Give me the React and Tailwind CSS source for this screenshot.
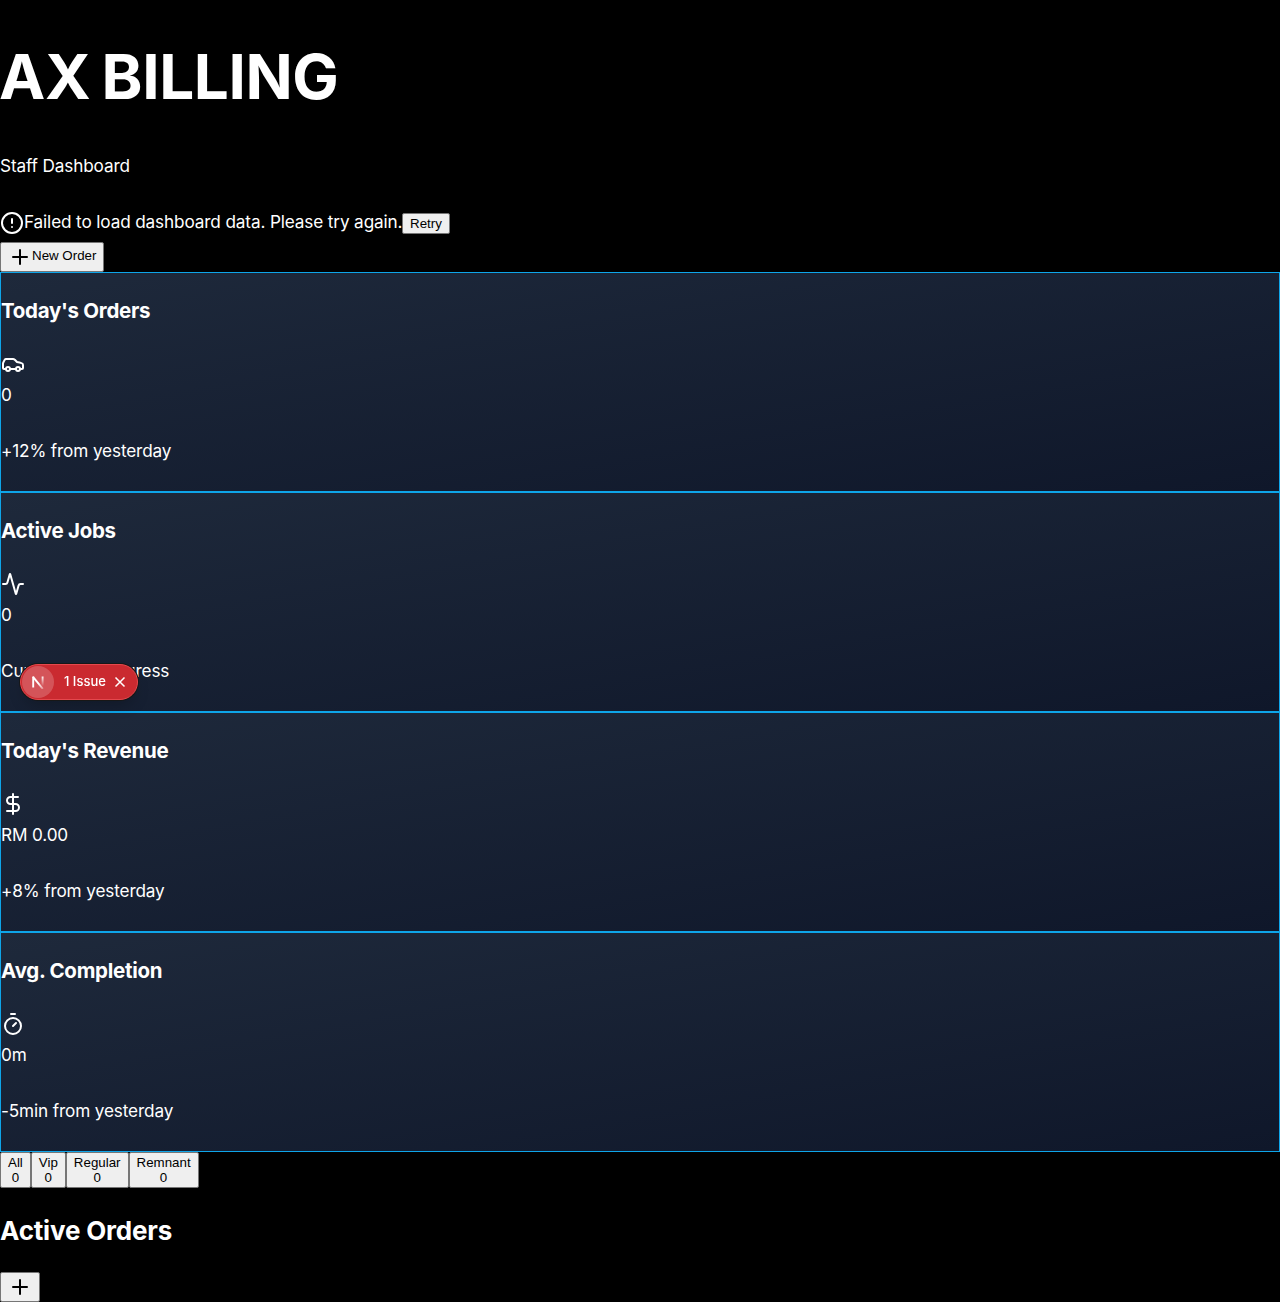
import { CircleAlert, Plus, Car, Activity, DollarSign, Timer } from "lucide-react";

const stats = [
  { title: "Today's Orders", Icon: Car, value: "0", note: "+12% from yesterday" },
  { title: "Active Jobs", Icon: Activity, value: "0", note: "Currently in progress" },
  { title: "Today's Revenue", Icon: DollarSign, value: "RM 0.00", note: "+8% from yesterday" },
  { title: "Avg. Completion", Icon: Timer, value: "0m", note: "-5min from yesterday" },
];

const tabs = ["All", "Vip", "Regular", "Remnant"];

const button =
  "rounded-[2px] border border-[#767676] bg-[#efefef] px-[7px] font-['Liberation_Sans',sans-serif] text-[13.333px] leading-[15px] tracking-normal whitespace-nowrap text-black";

function StatCard({ title, Icon, value, note }) {
  return (
    <section className="h-[220px] border border-[#0ea5e9] bg-[linear-gradient(to_bottom_right,#1e293b_0%,#0f172a_100%)]">
      <h3 className="mt-[22px] h-8 text-[20.5px] leading-8 font-bold tracking-[-0.28px]">{title}</h3>
      <Icon className="mt-[25px] block" size={24} />
      <div className="mt-[5px] h-7 leading-7">{value}</div>
      <p className="mt-7 leading-7">{note}</p>
    </section>
  );
}

function IssueBadge() {
  return (
    <div className="fixed top-[664px] left-5 flex h-9 w-[118px] items-center rounded-full border border-[#e5484d] bg-[#ca2a30] p-px text-[13px] font-medium tracking-normal shadow-[0_0_0_1px_#171717,0_8px_16px_-4px_rgba(0,0,0,0.24)]">
      <span className="flex size-8 items-center justify-center rounded-full bg-white/20">
        <svg width="14" height="14" viewBox="0 0 14 14" fill="none" strokeWidth="1.9">
          <defs>
            <linearGradient id="stem" gradientUnits="userSpaceOnUse" x1="11" y1="1" x2="11" y2="11">
              <stop stopColor="white" />
              <stop offset="1" stopColor="white" stopOpacity="0" />
            </linearGradient>
            <linearGradient id="diagonal" gradientUnits="userSpaceOnUse" x1="8" y1="8" x2="13.5" y2="15">
              <stop stopColor="white" />
              <stop offset="1" stopColor="white" stopOpacity="0.2" />
            </linearGradient>
          </defs>
          <path d="M2.2 12.5V1.5" stroke="white" />
          <path d="m2 1.8 9.8 12" stroke="url(#diagonal)" />
          <path d="M11.6 1.5V11" stroke="url(#stem)" />
        </svg>
      </span>
      <span className="ml-2.5">1 Issue</span>
      <svg className="ml-2" width="12" height="12" viewBox="0 0 12 12" stroke="white" strokeWidth="1.5">
        <path d="m1.5 1.5 9 9m0-9-9 9" />
      </svg>
    </div>
  );
}

export default function App() {
  return (
    <main className="h-[1302px] overflow-hidden bg-black font-[Inter,sans-serif] text-[17.2px] tracking-[-0.14px] text-white">
      <h1 className="-ml-px mt-[42px] text-[62px] leading-[70px] font-bold tracking-[-0.4px] [word-spacing:-3px]">AX BILLING</h1>
      <p className="mt-10 leading-7">Staff Dashboard</p>
      <div className="mt-7 flex h-[34px] items-start leading-7">
        <CircleAlert className="mt-[3px]" size={24} />
        <span className="w-[378px] whitespace-nowrap">Failed to load dashboard data. Please try again.</span>
        <button className={button + " mt-[5px] h-[21px] w-12"}>Retry</button>
      </div>
      <button className={button + " flex h-[30px] w-[104px] items-center"}>
        <Plus className="shrink-0" size={24} />
        <span className="mb-[3px]">New Order</span>
      </button>
      {stats.map((stat) => (
        <StatCard key={stat.title} {...stat} />
      ))}
      <div className="flex">
        {tabs.map((tab) => (
          <button key={tab} className={button + " h-9"}>
            <div>{tab}</div>
            <div>0</div>
          </button>
        ))}
      </div>
      <h2 className="mt-6 text-[26px] leading-[38px] font-bold tracking-[-0.18px]">Active Orders</h2>
      <button className={button + " mt-[22px] flex h-[30px] w-10 items-center"}>
        <Plus className="shrink-0" size={24} />
      </button>
      <IssueBadge />
    </main>
  );
}
